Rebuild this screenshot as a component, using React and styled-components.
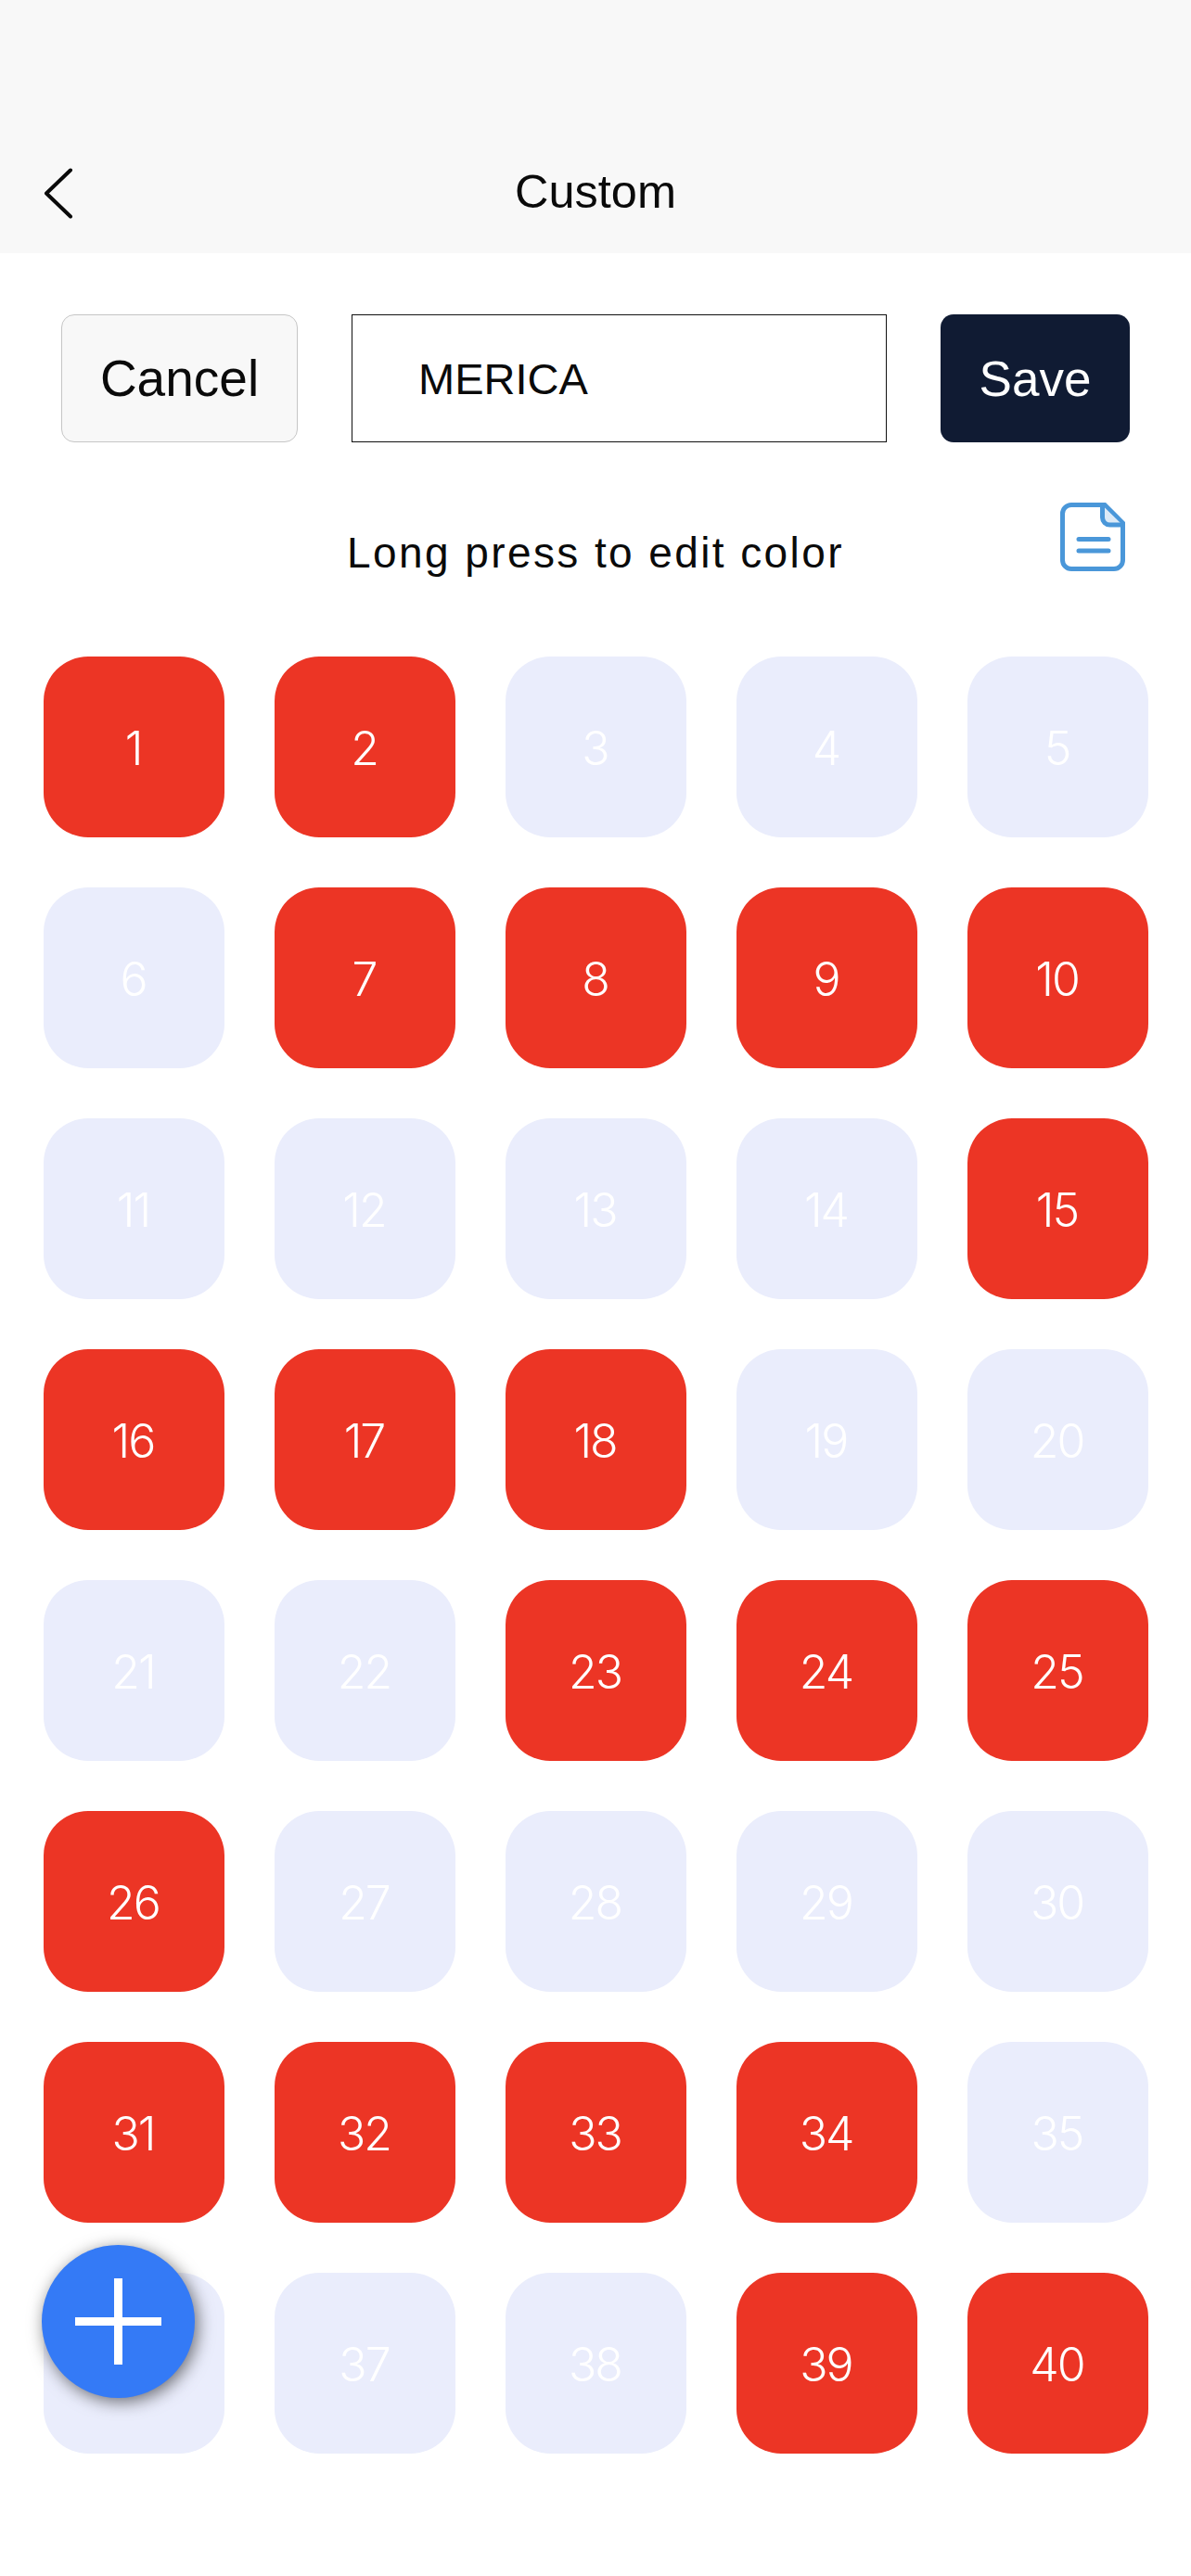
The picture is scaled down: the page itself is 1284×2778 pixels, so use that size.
import React from "react";
import styled, { createGlobalStyle } from "styled-components";

const Global = createGlobalStyle`
  html, body { margin: 0; padding: 0; background: #fff; }
  * { box-sizing: border-box; }
  body { font-family: "Liberation Sans", Arial, sans-serif; color: #0a0a0a; }
`;

const Page = styled.div`
  position: relative;
  width: 1284px;
  height: 2778px;
  overflow: hidden;
  background: #fff;
`;

const Header = styled.header`
  height: 273px;
  background: #f8f8f8;
  display: grid;
  grid-template-columns: 1fr auto 1fr;
  align-items: end;
  padding: 0 46px 37px 46px;
`;

const BackButton = styled.div`
  display: flex;
  width: 34px;
  height: 56px;
`;

const Title = styled.h1`
  margin: 0;
  font-size: 50.5px;
  line-height: 58px;
  font-weight: 400;
  color: #0a0a0a;
`;

const ActionRow = styled.div`
  display: flex;
  align-items: stretch;
  height: 138px;
  margin: 66px 66px 0 66px;
  gap: 58px;
`;

const CancelButton = styled.button`
  width: 255px;
  border: 1px solid #c6c6c6;
  border-radius: 14px;
  background: #f8f8f8;
  color: #0a0a0a;
  font: 400 55px "Liberation Sans", Arial, sans-serif;
  padding: 0;
`;

const NameField = styled.div`
  flex: 1;
  display: flex;
  align-items: center;
  border: 1px solid #111;
  padding-left: 71px;
  font-size: 47px;
  color: #0a0a0a;
`;

const SaveButton = styled.button`
  width: 204px;
  border: 0;
  border-radius: 14px;
  background: #101b33;
  color: #fff;
  font: 400 53px "Liberation Sans", Arial, sans-serif;
  padding: 0;
`;

const HintRow = styled.div`
  position: relative;
  margin-top: 65px;
  height: 83px;
  display: flex;
  align-items: flex-end;
  justify-content: center;
`;

const Hint = styled.div`
  font-size: 46px;
  line-height: 58px;
  letter-spacing: 2.4px;
  color: #0a0a0a;
`;

const DocIcon = styled.svg`
  position: absolute;
  left: 1143px;
  top: 0;
  width: 70px;
  height: 74px;
`;

const Grid = styled.div`
  display: grid;
  grid-template-columns: repeat(5, 195px);
  grid-auto-rows: 195px;
  gap: 54px;
  margin: 83px 0 0 47px;
`;

const Tile = styled.div`
  display: flex;
  align-items: center;
  justify-content: center;
  border-radius: 48px;
  background: ${(p) => (p.$on ? "#ec3525" : "#eaedfc")};
  color: #fff;
  font-family: Inter, "Liberation Sans", sans-serif;
  font-weight: 300;
  font-size: 50px;
  letter-spacing: -2px;
  padding-top: 2px;
  padding-right: 2px;
`;

const Fab = styled.button`
  position: absolute;
  left: 45px;
  top: 2421px;
  width: 165px;
  height: 165px;
  border: 0;
  padding: 0;
  border-radius: 50%;
  background: #347af6;
  box-shadow: 3px 4px 18px rgba(0, 0, 0, 0.55);
  display: flex;
  align-items: center;
  justify-content: center;
`;

const on = new Set([1, 2, 7, 8, 9, 10, 15, 16, 17, 18, 23, 24, 25, 26, 31, 32, 33, 34, 39, 40]);
const tiles = Array.from({ length: 40 }, (_, i) => i + 1);

export default function App() {
  return (
    <Page>
      <Global />
      <Header>
        <BackButton>
          <svg width="34" height="56" viewBox="0 0 34 56" fill="none">
            <polyline points="30,3.5 4,28.5 30,53.5" stroke="#0a0a0a" strokeWidth="4" strokeLinecap="round" strokeLinejoin="round" />
          </svg>
        </BackButton>
        <Title>Custom</Title>
      </Header>
      <ActionRow>
        <CancelButton>Cancel</CancelButton>
        <NameField>MERICA</NameField>
        <SaveButton>Save</SaveButton>
      </ActionRow>
      <HintRow>
        <Hint>Long press to edit color</Hint>
        <DocIcon viewBox="0 0 70 74" fill="none">
          <path d="M12 2.5H48L67.5 22V62a9.5 9.5 0 0 1-9.5 9.5H12A9.5 9.5 0 0 1 2.5 62V12A9.5 9.5 0 0 1 12 2.5Z" stroke="#4a97d9" strokeWidth="5" />
          <path d="M45.5 3V16a8 8 0 0 0 8 8H67" stroke="#4a97d9" strokeWidth="5" fill="#dceaf7" />
          <path d="M20 39.5H52M20 52H52" stroke="#4a97d9" strokeWidth="5" strokeLinecap="round" />
        </DocIcon>
      </HintRow>
      <Grid>
        {tiles.map((n) => (
          <Tile key={n} $on={on.has(n)}>{n}</Tile>
        ))}
      </Grid>
      <Fab aria-label="Add">
        <svg width="93" height="93" viewBox="0 0 93 93">
          <path d="M42 0h9v42h42v9H51v42h-9V51H0v-9h42Z" fill="#fff" />
        </svg>
      </Fab>
    </Page>
  );
}
